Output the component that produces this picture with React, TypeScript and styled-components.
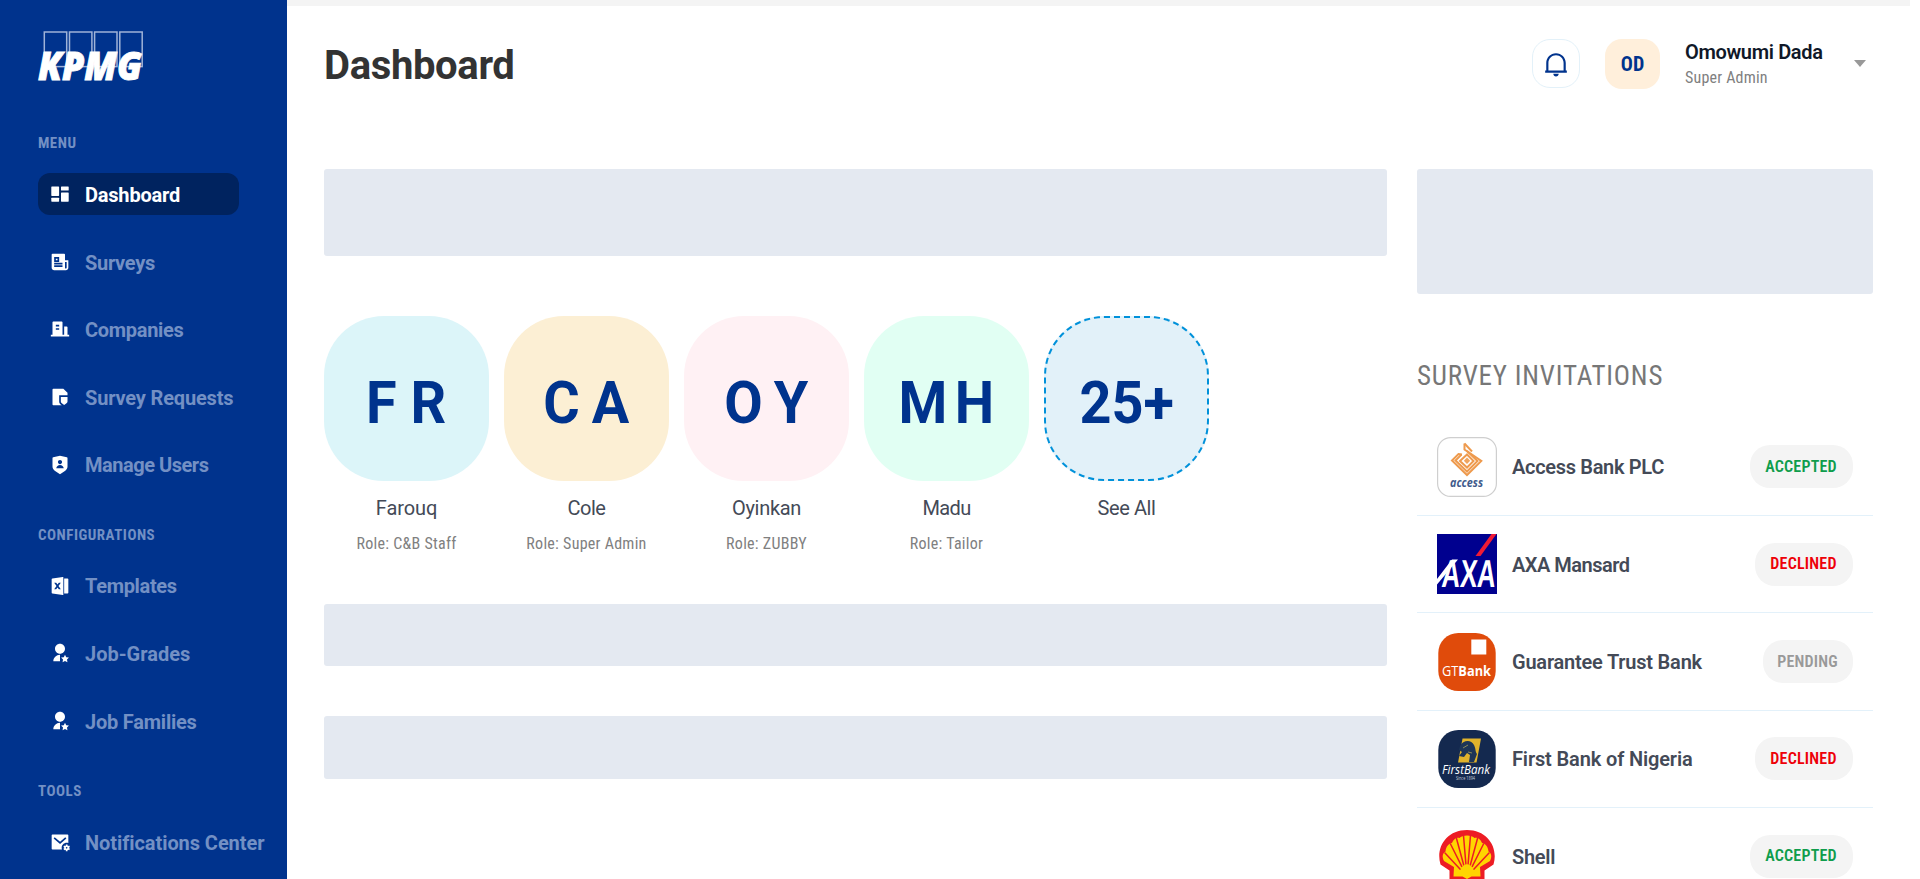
import React from "react";
import styled, { createGlobalStyle } from "styled-components";
import {
  RiBuildingFill,
  RiFileExcel2Fill,
  RiFileShield2Fill,
  RiMailSettingsFill,
  RiNewspaperFill,
  RiNotification2Line,
  RiShieldUserFill,
  RiUserStarFill,
} from "react-icons/ri";

const GlobalStyle = createGlobalStyle`
  * { box-sizing: border-box; }
  body {
    margin: 0;
    background: #fff;
    font-family: Roboto, "Liberation Sans", sans-serif;
    overflow: hidden;
  }
  h1, h2, p, ul { margin: 0; padding: 0; }
  ul { list-style: none; }
`;

const Layout = styled.div`
  display: flex;
  height: 100vh;
  overflow: hidden;
`;

/* ---------- Sidebar ---------- */

const Sidebar = styled.aside`
  flex: 0 0 287px;
  padding: 30px 0 0 38px;
  background: #00338d;
  overflow: hidden;
`;

const Brand = styled.div`
  height: 104.3px;

  svg {
    overflow: visible;
  }
`;

const NavGroup = styled.section`
  display: flex;
  flex-direction: column;
  gap: 21px;
  margin-bottom: 40px;
`;

const NavLabel = styled.h2`
  font: 700 15px/18px "Roboto Condensed", Roboto, sans-serif;
  letter-spacing: 0.5px;
  color: #7390c4;
`;

const NavList = styled.ul`
  display: flex;
  flex-direction: column;
  gap: 25.6px;
`;

const NavItem = styled.li<{ $active?: boolean }>`
  display: flex;
  align-items: center;
  gap: 15px;
  width: 201px;
  height: 42px;
  padding-left: 12px;
  border-radius: 12px;
  background: ${(p) => (p.$active ? "#00235f" : "transparent")};
  color: ${(p) => (p.$active ? "#fff" : "#7390c4")};

  svg {
    flex: none;
    width: 20px;
    height: 20px;
    color: #fff;
  }
`;

const NavText = styled.span<{ $tracking: number }>`
  padding-top: 1.4px;
  font-size: 20px;
  line-height: 24px;
  font-weight: 700;
  letter-spacing: ${(p) => p.$tracking}px;
  white-space: nowrap;
`;

/* ---------- Page ---------- */

const Page = styled.div`
  flex: 1;
  display: flex;
  flex-direction: column;
  margin-right: 10px;
  border-top: 6px solid #f4f4f4;
`;

const Header = styled.header`
  flex: none;
  display: flex;
  justify-content: space-between;
  align-items: flex-start;
  height: 163px;
  padding: 30px 44px 0 37px;
`;

const Title = styled.h1`
  margin-top: 6px;
  font-size: 40px;
  line-height: 48px;
  font-weight: 700;
  letter-spacing: -0.35px;
  color: #333;
`;

const Account = styled.div`
  display: flex;
  align-items: center;
`;

const BellButton = styled.button`
  display: grid;
  place-items: center;
  width: 48px;
  height: 49px;
  margin-right: 25px;
  padding: 0;
  border: 1px solid #e3f1f9;
  border-radius: 18px;
  background: #fff;
  color: #00338d;
  font-size: 26px;
`;

const UserBadge = styled.div`
  display: grid;
  place-items: center;
  width: 55px;
  height: 50px;
  border-radius: 17px;
  background: #ffefdb;
  color: #00338d;
  font: 700 20px/24px "Roboto Condensed", Roboto, sans-serif;
`;

const UserText = styled.div`
  width: 169px;
  margin-left: 25px;
  padding-top: 3px;
`;

const UserName = styled.p`
  font-size: 20px;
  line-height: 26px;
  font-weight: 600;
  letter-spacing: -0.35px;
  color: #101828;
`;

const UserRole = styled.p`
  font: 400 16px/26px "Roboto Condensed", Roboto, sans-serif;
  letter-spacing: 0.2px;
  color: #808080;
`;

const Caret = styled.span`
  border: 6.5px solid transparent;
  border-top: 7px solid #999;
  border-bottom: 0;
`;

const Columns = styled.main`
  display: grid;
  grid-template-columns: 1063px 456px;
  column-gap: 30px;
  padding-left: 37px;
`;

const Column = styled.div`
  display: flex;
  flex-direction: column;
`;

const Skeleton = styled.div<{ $height: number; $gap?: number }>`
  flex: none;
  height: ${(p) => p.$height}px;
  margin-bottom: ${(p) => p.$gap ?? 0}px;
  border-radius: 3px;
  background: #e4e9f1;
`;

/* ---------- People ---------- */

const People = styled.div`
  display: flex;
  gap: 15px;
  height: 288px;
`;

const Person = styled.div`
  display: flex;
  flex-direction: column;
  align-items: center;
  width: 165px;
`;

const Avatar = styled.div<{ $color: string; $dashed?: boolean }>`
  display: grid;
  place-items: center;
  width: 165px;
  height: 165px;
  padding-top: 9px;
  border: ${(p) => (p.$dashed ? "2px dashed #0091da" : "0")};
  border-radius: 60px;
  background: ${(p) => p.$color};
`;

const Initials = styled.span<{ $word?: number }>`
  color: #00338d;
  font-size: 60px;
  line-height: 70px;
  font-weight: 700;
  white-space: nowrap;
  word-spacing: ${(p) => p.$word ?? 0}px;
  transform: scaleX(0.93);
`;

const PersonName = styled.p<{ $tracking: number }>`
  margin-top: 15px;
  font-size: 20px;
  line-height: 24px;
  font-weight: 450;
  letter-spacing: ${(p) => p.$tracking}px;
  color: #444a57;
`;

const PersonRole = styled.p`
  margin-top: 14px;
  font: 400 16px/20px "Roboto Condensed", Roboto, sans-serif;
  letter-spacing: 0.27px;
  color: #808080;
`;

/* ---------- Invitations ---------- */

const PanelTitle = styled.h2`
  height: 124.6px;
  padding-top: 65px;
  font: 400 27px/34px "Roboto Condensed", Roboto, sans-serif;
  letter-spacing: 0.8px;
  color: #777;
`;

const Invitation = styled.div`
  display: flex;
  align-items: center;
  flex: none;
  height: 97.4px;
  padding: 0 20px;
  border-bottom: 1px solid #e3f1fa;

  svg {
    flex: none;
    width: 60px;
    height: 60px;
  }
`;

const CompanyName = styled.p<{ $tracking: number }>`
  flex: 1;
  margin-left: 15px;
  padding-top: 1px;
  font-size: 20px;
  font-weight: 600;
  letter-spacing: ${(p) => p.$tracking}px;
  color: #444a57;
`;

type Status = "ACCEPTED" | "DECLINED" | "PENDING";

const statusStyle: Record<Status, { color: string; width: number }> = {
  ACCEPTED: { color: "#0f9d4c", width: 103 },
  DECLINED: { color: "#ee0008", width: 98 },
  PENDING: { color: "#999", width: 90 },
};

const StatusPill = styled.span<{ $status: Status }>`
  display: grid;
  place-items: center;
  width: ${(p) => statusStyle[p.$status].width}px;
  height: 43px;
  padding-right: 1px;
  border-radius: 20px;
  background: #f4f4f4;
  color: ${(p) => statusStyle[p.$status].color};
  font: 600 16px/20px "Roboto Condensed", Roboto, sans-serif;
  letter-spacing: 0.2px;
`;

/* ---------- Drawings ---------- */

const KpmgLogo = () => (
  <svg width="110" height="54" viewBox="38 30 110 54">
    <g fill="none" stroke="#9fb3d8" strokeWidth="1.5">
      {[44.3, 69.5, 94.6, 119.8].map((x) => (
        <rect key={x} x={x} y="32" width="22.4" height="34.6" />
      ))}
    </g>
    <text
      x="38"
      y="80"
      fill="#fff"
      stroke="#fff"
      strokeWidth=".9"
      textLength="104"
      lengthAdjust="spacingAndGlyphs"
      fontFamily="Open Sans"
      fontSize="39.5"
      fontWeight="800"
      fontStyle="italic"
    >
      KPMG
    </text>
  </svg>
);

const DashboardIcon = () => (
  <svg viewBox="0 0 20 20" fill="currentColor">
    <rect x="1.3" y="2.4" width="7.8" height="9.5" rx=".6" />
    <rect x="1.3" y="13.7" width="7.8" height="4" rx=".6" />
    <rect x="11" y="2.4" width="7.7" height="4.1" rx=".6" />
    <rect x="11" y="8.4" width="7.7" height="9.3" rx=".6" />
  </svg>
);

const AccessLogo = () => (
  <svg viewBox="0 0 60 60">
    <rect x=".6" y=".6" width="58.8" height="58.8" rx="13" fill="#fff" stroke="#cfcfcf" strokeWidth="1.2" />
    <g fill="none" stroke="#ee9a4d" strokeWidth="2">
      <path d="M27.5 6.5v6L44.3 24 30 38 15 23.5l6.500-6.500 3.500.5" />
      <path d="M27.500 6.500l7.500 8" />
      <path d="M24.500 17.500L18.500 23.500 30 34.500 40.500 24 30 14" />
      <path d="M30 17.500L23 24l7 6.500 6.500-6.500z" />
    </g>
    <path d="M30 20.500l3.200 3.300L30 27l-3.200-3.200z" fill="#f0a55f" />
    <text x="13" y="50" fill="#3f5b8c" fontFamily="Open Sans" fontSize="12" fontWeight="700" fontStyle="italic" textLength="33" lengthAdjust="spacingAndGlyphs">
      access
    </text>
  </svg>
);

const AxaLogo = () => (
  <svg viewBox="0 0 60 60">
    <rect width="60" height="60" fill="#00008f" />
    <path d="M38.500 22h5L59.500 0h-5z" fill="#f01a35" />
    <path d="M0 45L15 25.500h6L0 50.500z" fill="#fff" />
    <text transform="translate(4 52.500) skewX(-4) scale(.655 1)" fill="#fff" fontFamily="Liberation Sans" fontSize="39" fontWeight="700">
      AXA
    </text>
  </svg>
);

const GtBankLogo = () => (
  <svg viewBox="0 0 60 60">
    <rect x="1.300" y="1" width="57.400" height="58" rx="20" fill="#e04b0b" />
    <rect x="34.300" y="7.500" width="15" height="15" fill="#fff" />
    <text x="5" y="44" fill="#fff" fontFamily="Open Sans" fontSize="15" textLength="49" lengthAdjust="spacingAndGlyphs">
      GT<tspan fontWeight="700">Bank</tspan>
    </text>
  </svg>
);

const FirstBankLogo = () => (
  <svg viewBox="0 0 60 60">
    <rect x="1.300" y="1" width="57.400" height="58" rx="20" fill="#14294f" />
    <path d="M25.500 9.500H44L39.500 33.500H21z" fill="#e0b32c" />
    <path d="M23 17c3-6 11-7 14-1 2 4 1 6 3 9l-3 8h-5l1-7-3-2-3 4-5-1 3-4-3-2z" fill="#1d3557" />
    <path d="M26 19l5-3M31 23l4 1" stroke="#8a8a5a" strokeWidth="1" />
    <text x="5" y="45" fill="#fff" fontFamily="Open Sans" fontSize="12.500" fontStyle="italic" fontWeight="500" textLength="48" lengthAdjust="spacingAndGlyphs">
      FirstBank
    </text>
    <text x="19" y="50.500" fill="#c9cfda" fontFamily="Open Sans" fontSize="4.500" textLength="19" lengthAdjust="spacingAndGlyphs">
      Since 1894
    </text>
  </svg>
);

const ShellLogo = () => (
  <svg viewBox="0 0 60 60">
    <path d="M12.500 58V44.500L3.500 38.500C-1.500 22 9 4 30 4s31.500 18 26.500 34.500L47.500 44.500V58z" fill="#ed1c24" />
    <path
      d="M16.500 50.500l.5-9.500L7 35C4.500 30 6 27 8.500 25.500 9 20 12 17.500 15 17c1.500-4 4.500-6 7.500-5 2.500-3.500 12.500-3.500 15 0 3-1 6 1 7.500 5 3 .5 6 3 6.500 8.500C54 27 55.500 30 53 35l-10 6 .5 9.500h-9L30 53l-4.500-2.500z"
      fill="#ffd500"
    />
    <g stroke="#ed1c24" strokeWidth="1.500" strokeLinecap="round">
      {[
        [8, 27],
        [13.5, 18],
        [19.5, 12.5],
        [26.5, 9.5],
        [33.5, 9.5],
        [40.5, 12.5],
        [46.5, 18],
        [52, 27],
      ].map(([x, y]) => (
        <path key={x} d={`M${x} ${y}L${30 + (x - 30) * 0.32} ${y + (50 - y) * 0.7}`} />
      ))}
    </g>
  </svg>
);

/* ---------- Data ---------- */

const navGroups = [
  {
    label: "MENU",
    items: [
      { text: "Dashboard", icon: <DashboardIcon />, tracking: -0.2, active: true },
      { text: "Surveys", icon: <RiNewspaperFill />, tracking: -0.3 },
      { text: "Companies", icon: <RiBuildingFill />, tracking: -0.3 },
      { text: "Survey Requests", icon: <RiFileShield2Fill />, tracking: -0.17 },
      { text: "Manage Users", icon: <RiShieldUserFill />, tracking: -0.48 },
    ],
  },
  {
    label: "CONFIGURATIONS",
    items: [
      { text: "Templates", icon: <RiFileExcel2Fill />, tracking: -0.33 },
      { text: "Job-Grades", icon: <RiUserStarFill />, tracking: 0 },
      { text: "Job Families", icon: <RiUserStarFill />, tracking: -0.22 },
    ],
  },
  {
    label: "TOOLS",
    items: [{ text: "Notifications Center", icon: <RiMailSettingsFill />, tracking: -0.07 }],
  },
];

const people = [
  { initials: "F R", name: "Farouq", role: "Role: C&B Staff", color: "#dcf5f9", word: 0, tracking: -0.1 },
  { initials: "C A", name: "Cole", role: "Role: Super Admin", color: "#fcefd4", word: -2, tracking: -0.5 },
  { initials: "O Y", name: "Oyinkan", role: "Role: ZUBBY", color: "#fff1f4", word: -3, tracking: -0.3 },
  { initials: "M H", name: "Madu", role: "Role: Tailor", color: "#e1fff3", word: -7, tracking: -0.6 },
];

const invitations: { name: string; logo: React.ReactNode; status: Status; tracking: number }[] = [
  { name: "Access Bank PLC", logo: <AccessLogo />, status: "ACCEPTED", tracking: -0.32 },
  { name: "AXA Mansard", logo: <AxaLogo />, status: "DECLINED", tracking: -0.5 },
  { name: "Guarantee Trust Bank", logo: <GtBankLogo />, status: "PENDING", tracking: -0.21 },
  { name: "First Bank of Nigeria", logo: <FirstBankLogo />, status: "DECLINED", tracking: -0.14 },
  { name: "Shell", logo: <ShellLogo />, status: "ACCEPTED", tracking: -0.3 },
];

export default function App() {
  return (
    <Layout>
      <GlobalStyle />
      <Sidebar>
        <Brand>
          <KpmgLogo />
        </Brand>
        {navGroups.map((group) => (
          <NavGroup key={group.label}>
            <NavLabel>{group.label}</NavLabel>
            <NavList>
              {group.items.map((item) => (
                <NavItem key={item.text} $active={"active" in item}>
                  {item.icon}
                  <NavText $tracking={item.tracking}>{item.text}</NavText>
                </NavItem>
              ))}
            </NavList>
          </NavGroup>
        ))}
      </Sidebar>
      <Page>
        <Header>
          <Title>Dashboard</Title>
          <Account>
            <BellButton aria-label="Notifications">
              <RiNotification2Line />
            </BellButton>
            <UserBadge>OD</UserBadge>
            <UserText>
              <UserName>Omowumi Dada</UserName>
              <UserRole>Super Admin</UserRole>
            </UserText>
            <Caret />
          </Account>
        </Header>
        <Columns>
          <Column>
            <Skeleton $height={87} $gap={60} />
            <People>
              {people.map((p) => (
                <Person key={p.name}>
                  <Avatar $color={p.color}>
                    <Initials $word={p.word}>{p.initials}</Initials>
                  </Avatar>
                  <PersonName $tracking={p.tracking}>{p.name}</PersonName>
                  <PersonRole>{p.role}</PersonRole>
                </Person>
              ))}
              <Person>
                <Avatar $color="#e2f1f9" $dashed>
                  <Initials>25+</Initials>
                </Avatar>
                <PersonName $tracking={-0.4}>See All</PersonName>
              </Person>
            </People>
            <Skeleton $height={62} $gap={50} />
            <Skeleton $height={63} />
          </Column>
          <Column>
            <Skeleton $height={125} />
            <PanelTitle>SURVEY INVITATIONS</PanelTitle>
            {invitations.map((row) => (
              <Invitation key={row.name}>
                {row.logo}
                <CompanyName $tracking={row.tracking}>{row.name}</CompanyName>
                <StatusPill $status={row.status}>{row.status}</StatusPill>
              </Invitation>
            ))}
          </Column>
        </Columns>
      </Page>
    </Layout>
  );
}
